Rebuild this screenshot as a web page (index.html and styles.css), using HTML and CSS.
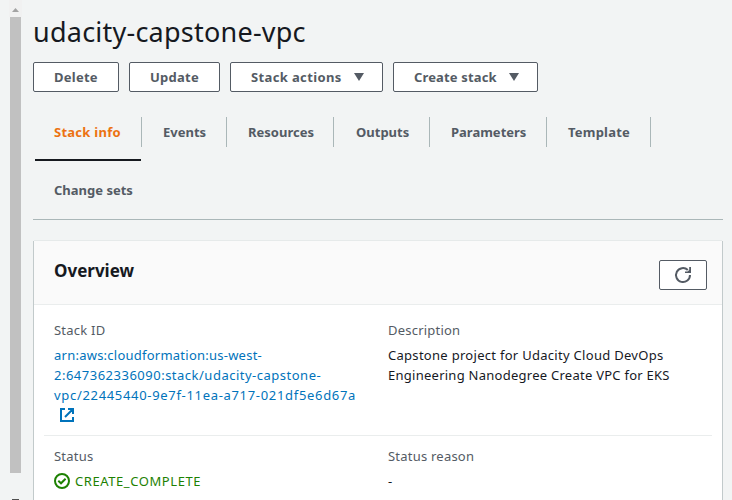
FILE: index.html
```
<!DOCTYPE html>
<html lang="en">
<head>
<meta charset="utf-8">
<title>udacity-capstone-vpc</title>
<link rel="stylesheet" href="styles.css">
</head>
<body>
<div class="page">
  <aside class="scrollbar">
    <svg class="scroll-arrow" width="13" height="17" viewBox="0 0 13 17"><path d="M3 12h7L6.500 8z" fill="#a3a3a3"/></svg>
    <div class="thumb"></div>
    <div class="scroll-mark"></div>
  </aside>
  <main class="content">
    <h1 class="title">udacity-capstone-vpc</h1>
    <div class="actions">
      <button class="btn btn-delete">Delete</button>
      <button class="btn btn-update">Update</button>
      <button class="btn btn-stack">Stack actions<svg class="caret" width="10" height="8" viewBox="0 0 10 8"><path d="M0 0h10L5 8z"/></svg></button>
      <button class="btn btn-create">Create stack<svg class="caret" width="10" height="8" viewBox="0 0 10 8"><path d="M0 0h10L5 8z"/></svg></button>
    </div>
    <nav class="tabs">
      <a class="tab tab-info active">Stack info</a>
      <a class="tab tab-events">Events</a>
      <a class="tab tab-resources">Resources</a>
      <a class="tab tab-outputs">Outputs</a>
      <a class="tab tab-parameters">Parameters</a>
      <a class="tab tab-template">Template</a>
      <a class="tab tab-changes">Change sets</a>
    </nav>
    <section class="card">
      <header class="card-head">
        <h2 class="card-title">Overview</h2>
        <button class="btn refresh" aria-label="Refresh"><svg width="18" height="18" viewBox="0 0 18 18" fill="none" stroke="#545b64" stroke-width="2"><path d="M16 9a7 7 0 1 1-2.200-5"/><path d="M17 1v6h-6V5.500h2.500L15.200 4V1z" fill="#545b64" stroke="none"/></svg></button>
      </header>
      <div class="row row-id">
        <div class="cell">
          <div class="label">Stack ID</div>
          <div class="value link"><span class="id1">arn:aws:cloudformation:us-west-</span><br><span class="id2">2:647362336090:stack/udacity-capstone-</span><br><span class="id3">vpc/22445440-9e7f-11ea-a717-021df5e6d67a</span><br><svg class="external" width="14" height="14" viewBox="0 0 14 14" fill="none" stroke="#0073bb" stroke-width="2"><path d="M5 1H1v12h12V9M8 1h5v5M13 1L5 9"/></svg></div>
        </div>
        <div class="cell">
          <div class="label">Description</div>
          <div class="value"><span class="d1">Capstone project for Udacity Cloud DevOps</span><br><span class="d2">Engineering Nanodegree Create VPC for EKS</span></div>
        </div>
      </div>
      <div class="row row-status">
        <div class="cell">
          <div class="label">Status</div>
          <div class="value status"><svg width="16" height="16" viewBox="0 0 16 16" fill="none" stroke="#1d8102" stroke-width="2"><circle cx="8" cy="8" r="7"/><path d="M4.300 7.800l2.700 2.500 4.600-4.600"/></svg><span class="s1">CREATE_COMPLETE</span></div>
        </div>
        <div class="cell">
          <div class="label">Status reason</div>
          <div class="value">-</div>
        </div>
      </div>
    </section>
  </main>
</div>
</body>
</html>
```
FILE: styles.css
```
* { box-sizing: border-box; }
body {
  margin: 0;
  background: #f2f4f4;
  color: #16191f;
  font-family: "Noto Sans", "Open Sans", sans-serif;
  font-size: 13px;
  line-height: 20px;
  overflow: hidden;
}
.page { display: flex; height: 500px; overflow: hidden; }
.scrollbar { width: 33px; flex: none; display: flex; flex-direction: column; padding-left: 9px; }
.scroll-arrow { display: block; background: #f1f1f1; }
.thumb { width: 11px; height: 456px; margin-left: 1px; background: #c1c1c1; }
.scroll-mark { width: 7px; height: 1px; margin: 26px 0 0 3px; background: #505050; }
.content { width: 690px; flex: none; }
.title { margin: 14px 0 12px; font-size: 27px; line-height: 36px; font-weight: 400; letter-spacing: .23px; white-space: nowrap; }
.actions { display: flex; gap: 10px; }
.btn {
  height: 30px; padding: 0 0 0 20px; display: flex; align-items: center;
  border: 1px solid #545b64; border-radius: 2px; background: #fff; color: #545b64;
  font: 700 13px/20px "Noto Sans", "Open Sans", sans-serif; letter-spacing: .25px; white-space: nowrap;
}
.btn-delete { width: 86px; }
.btn-update { width: 91px; }
.btn-stack { width: 153px; letter-spacing: .37px; }
.btn-create { width: 145px; letter-spacing: .15px; }
.caret { margin: 0 18px 0 auto; fill: #545b64; }
.tabs {
  display: flex; flex-wrap: wrap; height: 118px; margin-top: 10px; padding-top: 1px;
  border-bottom: 1px solid #aab7b8; align-content: flex-start;
}
.tab {
  height: 58px; padding: 19px 0 0 21px; font-weight: 700; color: #545b64; white-space: nowrap;
  background: linear-gradient(#aab7b8, #aab7b8) right 14px / 1px 30px no-repeat;
}
.tab.active { color: #ec7211; }
.tab-info { width: 109px; letter-spacing: .26px; }
.tab-info::after { content: ""; display: block; width: 106px; height: 2px; margin: 17px 0 0 -19px; background: #16191f; }
.tab-events { width: 85px; }
.tab-resources { width: 107px; }
.tab-outputs { width: 96px; padding-left: 22px; }
.tab-parameters { width: 117px; }
.tab-template { width: 104px; margin-right: 60px; letter-spacing: .22px; }
.tab-changes { width: 130px; background: none; }
.card {
  height: 300px; margin: 21px 0 0 1px; width: 688px; background: #fff;
  box-shadow: 0 0 1px 1px #e3e8e8, 1px 0 0 #c2cacb, -1px 0 0 #c2cacb;
  box-shadow: 1px 0 0 #c2cacb, -1px 0 0 #c2cacb, 0 -1px 0 #e6eaea;
}
.card-head { display: flex; justify-content: space-between; height: 64px; padding: 19px 15px 0 20px; background: #fafafa; border-bottom: 1px solid #eaeded; }
.card-title { margin: 0; font-size: 17px; line-height: 22px; font-weight: 700; }
.refresh { width: 48px; padding: 0; justify-content: center; }
.row { display: grid; grid-template-columns: 334px 1fr; margin: 0 10px; padding-left: 10px; }
.row-id { height: 131px; padding-top: 15px; border-bottom: 1px solid #eaeded; }
.row-status { padding-top: 10px; }
.label { color: #545b64; margin-bottom: 5px; letter-spacing: .22px; }
.value, .label { white-space: nowrap; }
.link { color: #0073bb; }
.id1 { letter-spacing: .24px; }
.id2 { letter-spacing: .5px; }
.id3 { letter-spacing: .68px; }
.d1 { letter-spacing: .29px; }
.d2 { letter-spacing: .26px; }
.s1 { letter-spacing: .58px; }
.external { display: block; margin: 3px 0 0 6px; }
.status { display: flex; align-items: center; gap: 5px; color: #1d8102; }
```
